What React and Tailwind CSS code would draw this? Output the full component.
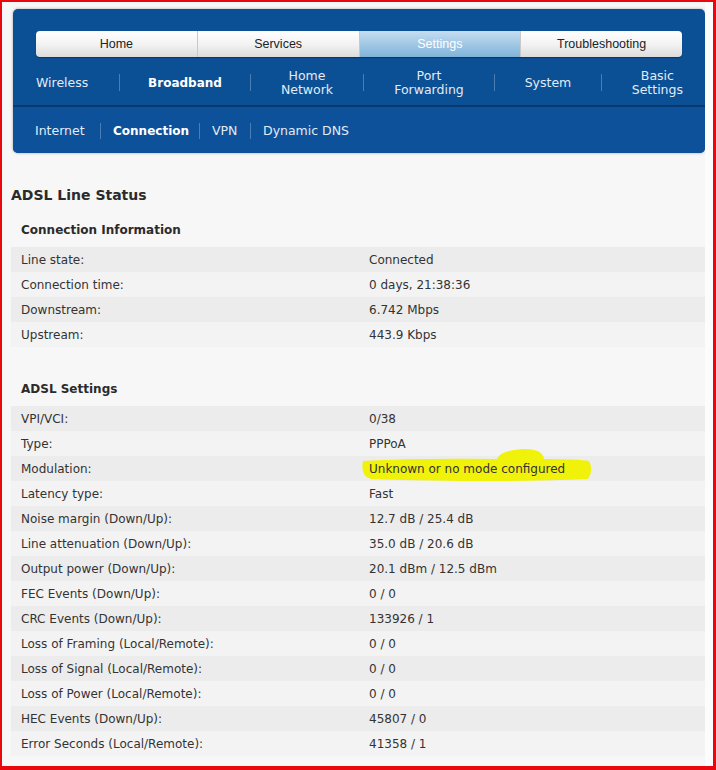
const tabs = [
  { label: "Home" },
  { label: "Services" },
  { label: "Settings", active: true },
  { label: "Troubleshooting" },
];

const mainNav = [
  { label: ["Wireless"], w: "w-[83px]", align: "justify-start" },
  { label: ["Broadband"], w: "w-[130px]", align: "justify-center", bold: true },
  { label: ["Home", "Network"], w: "w-[112px]", align: "justify-center" },
  { label: ["Port", "Forwarding"], w: "w-[130px]", align: "justify-center" },
  { label: ["System"], w: "w-[106px]", align: "justify-center" },
  { label: ["Basic", "Settings"], w: "w-[81px]", align: "justify-end" },
];

const subNav = [
  { label: "Internet", w: "w-[65px]" },
  { label: "Connection", w: "w-[98px] pl-[12px]", bold: true },
  { label: "VPN", w: "w-[50px] pl-[12px]" },
  { label: "Dynamic DNS", w: "pl-[12px]" },
];

const connectionInfo = [
  ["Line state:", "Connected"],
  ["Connection time:", "0 days, 21:38:36"],
  ["Downstream:", "6.742 Mbps"],
  ["Upstream:", "443.9 Kbps"],
];

const adslSettings = [
  ["VPI/VCI:", "0/38"],
  ["Type:", "PPPoA"],
  ["Modulation:", "Unknown or no mode configured", true],
  ["Latency type:", "Fast"],
  ["Noise margin (Down/Up):", "12.7 dB / 25.4 dB"],
  ["Line attenuation (Down/Up):", "35.0 dB / 20.6 dB"],
  ["Output power (Down/Up):", "20.1 dBm / 12.5 dBm"],
  ["FEC Events (Down/Up):", "0 / 0"],
  ["CRC Events (Down/Up):", "133926 / 1"],
  ["Loss of Framing (Local/Remote):", "0 / 0"],
  ["Loss of Signal (Local/Remote):", "0 / 0"],
  ["Loss of Power (Local/Remote):", "0 / 0"],
  ["HEC Events (Down/Up):", "45807 / 0"],
  ["Error Seconds (Local/Remote):", "41358 / 1"],
];

// highlighter stroke over the modulation value
function Highlight() {
  return (
    <svg
      className="absolute left-[-12px] top-[-12px] pointer-events-none"
      width="236"
      height="37"
      viewBox="0 0 236 37"
    >
      <path
        d="M 6 13 Q 60 10 140 11 Q 143 2 168 1 Q 186 1 187 11 Q 222 11 232 13 Q 237 22 231 31 Q 140 35 14 31 Q 3 28 6 13 Z"
        fill="#f0f20a"
      />
    </svg>
  );
}

function StatusTable({ rows }) {
  return (
    <div className="flex flex-col">
      {rows.map(([label, value, marked], i) => (
        <div
          key={label}
          className={`flex h-[25px] items-center ${i % 2 === 0 ? "bg-[#ececec]" : "bg-[#f3f3f3]"}`}
        >
          <div className="w-[358px] pl-[10px]">{label}</div>
          <div className="relative">
            {marked && <Highlight />}
            <span className="relative">{value}</span>
          </div>
        </div>
      ))}
    </div>
  );
}

export default function App() {
  return (
    <div className="w-[716px] h-[770px] overflow-hidden border-l-2 border-t-2 border-r-[3px] border-b-4 border-[#e8080d] bg-[#f7f7f7] flex">
      <div className="flex-1 pl-[9px] pt-[7px] font-['DejaVu_Sans',sans-serif] text-[12px] text-[#333]">
        {/* header */}
        <div className="w-[692px] ml-[2px] rounded-[5px] bg-[#0b4f94] shadow-[0_0_3px_rgba(0,0,0,0.35)] overflow-hidden">
          <div className="px-[23px] pt-[22px]">
            <div className="flex h-[26px] rounded-[4px] overflow-hidden shadow-[0_1px_1px_rgba(0,0,0,0.3)] font-['Liberation_Sans',sans-serif] text-[12.5px]">
              {tabs.map((t, i) => (
                <div
                  key={t.label}
                  className={`flex-1 flex items-center justify-center ${i > 0 ? "border-l border-[#c9c9c9]" : ""} ${
                    t.active
                      ? "bg-gradient-to-b from-[#c4ddf0] to-[#80b3da] text-white"
                      : "bg-gradient-to-b from-[#ffffff] via-[#f3f3f3] to-[#dcdcdc] text-[#222]"
                  }`}
                >
                  {t.label}
                </div>
              ))}
            </div>
            <div className="flex items-center h-[48px] pt-[3px] text-[#e3ebf4] text-[12.5px] leading-[14px]">
              {mainNav.map((n, i) => (
                <div key={n.label.join(" ")} className="flex items-center">
                  {i > 0 && <div className="w-px h-[17px] bg-[#4a7db4]" />}
                  <div
                    className={`${n.w} flex ${n.align} text-center ${n.bold ? "font-bold text-white text-[12px]" : ""}`}
                  >
                    <div>
                      {n.label.map((l) => (
                        <div key={l}>{l}</div>
                      ))}
                    </div>
                  </div>
                </div>
              ))}
            </div>
          </div>
          <div className="h-[2px] bg-[#073a70]" />
          <div className="flex items-center h-[46px] pt-[2px] pl-[22px] text-[#e3ebf4] text-[12.5px] bg-[#0c5199]">
            {subNav.map((s, i) => (
              <div key={s.label} className="flex items-center">
                {i > 0 && <div className="w-px h-[16px] bg-[#4a7db4]" />}
                <div className={`${s.w} ${s.bold ? "font-bold text-white text-[12px]" : ""}`}>{s.label}</div>
              </div>
            ))}
          </div>
        </div>

        {/* content */}
        <h1 className="mt-[33px] text-[14px] font-bold text-[#2b2b2b] leading-[18px]">ADSL Line Status</h1>
        <h2 className="mt-[19px] pl-[10px] font-bold text-[#2b2b2b] leading-[15px]">Connection Information</h2>
        <div className="mt-[9px]">
          <StatusTable rows={connectionInfo} />
        </div>
        <h2 className="mt-[35px] pl-[10px] font-bold text-[#2b2b2b] leading-[15px]">ADSL Settings</h2>
        <div className="mt-[9px]">
          <StatusTable rows={adslSettings} />
        </div>
      </div>
      <div className="w-[8px] bg-[#fcfcfd]" />
    </div>
  );
}
